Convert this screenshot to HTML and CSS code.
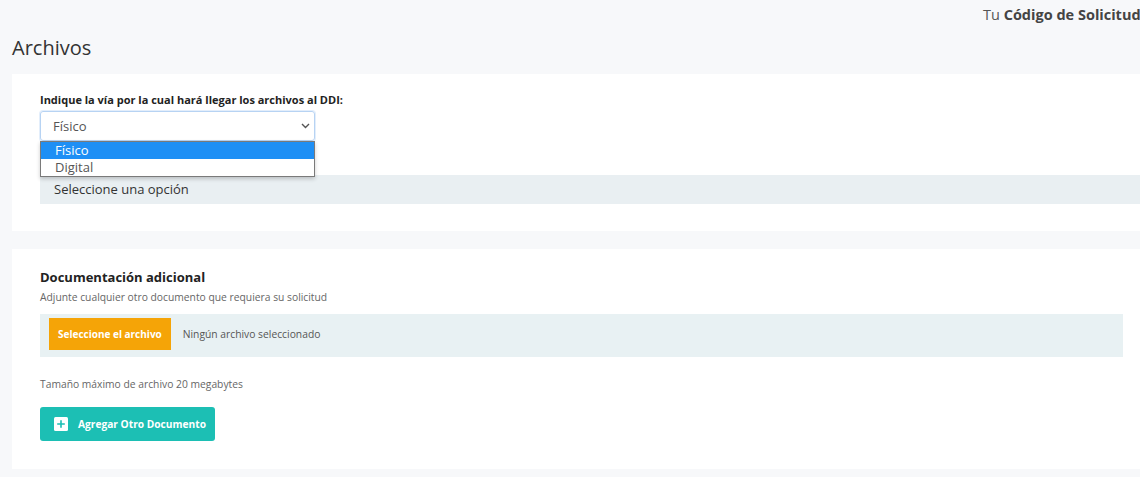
FILE: index.html
```html
<!DOCTYPE html>
<html lang="es">
<head>
  <meta charset="UTF-8">
  <meta name="viewport" content="width=device-width, initial-scale=1.0">
  <title>Archivos</title>
  <link rel="stylesheet" href="styles.css">
</head>
<body>
  <div class="topbar">Tu <b>Código de Solicitud</b></div>
  <h2 class="pageTitle">Archivos</h2>

  <div class="card cardVia">
    <label class="fieldLabel" for="listVia">Indique la vía por la cual hará llegar los archivos al DDI:</label>
    <div class="selectWrap">
      <div class="selectBox" id="listVia">
        <span>Físico</span>
        <svg class="chevron" width="9" height="6" viewBox="0 0 9 6"><path d="M1 1l3.5 3.5L8 1" fill="none" stroke="#555" stroke-width="1.4"/></svg>
      </div>
      <div class="selectMenu">
        <div class="selectOption active">Físico</div>
        <div class="selectOption">Digital</div>
      </div>
    </div>
    <div class="infoRow">Seleccione una opción</div>
  </div>

  <div class="card cardDocs">
    <h3 class="cardTitle">Documentación adicional</h3>
    <p class="hint">Adjunte cualquier otro documento que requiera su solicitud</p>
    <div class="fileRow">
      <span class="btnFile">Seleccione el archivo</span>
      <span class="fileName">Ningún archivo seleccionado</span>
    </div>
    <p class="hint sizeNote">Tamaño máximo de archivo 20 megabytes</p>
    <button class="btnAdd" type="button">
      <svg class="plusIcon" width="14" height="14" viewBox="0 0 14 14"><rect width="14" height="14" rx="1.5" fill="#fff"/><path d="M7 3.2v7.6M3.2 7h7.6" stroke="#1cbfb4" stroke-width="1.6"/></svg>
      <span>Agregar Otro Documento</span>
    </button>
  </div>
</body>
</html>
```

FILE: styles.css
```css
body {
  font-family: "Open Sans", Arial, sans-serif;
  margin: 0;
  padding: 0;
  background-color: #f7f8fa;
  color: #333;
  overflow: hidden;
}

.topbar {
  padding-left: 983px;
  font-size: 14.5px;
  line-height: 20px;
  padding-top: 5px;
  color: #555;
  white-space: nowrap;
}

.topbar b {
  color: #444;
}

.pageTitle {
  font-size: 20px;
  font-weight: 400;
  line-height: 27px;
  margin: 9px 0 13px 12px;
  color: #333;
}

.card {
  background-color: #fff;
  margin-left: 12px;
  width: 1083px;
  padding: 0 40px 0 28px;
}

.cardVia {
  padding-top: 18px;
  padding-bottom: 27px;
  margin-bottom: 18px;
}

.fieldLabel {
  display: block;
  font-size: 11px;
  font-weight: 700;
  line-height: 16px;
  color: #222;
  margin-bottom: 3px;
}

.selectWrap {
  position: relative;
  width: 275px;
  margin-bottom: 34px;
}

.selectBox {
  display: flex;
  align-items: center;
  justify-content: space-between;
  height: 30px;
  box-sizing: border-box;
  padding: 0 4px 0 12px;
  border: 1px solid #b7d3f3;
  border-radius: 3px;
  font-size: 13px;
  color: #555;
  box-shadow: 0 0 0 1px #e3eefb;
}

.selectMenu {
  position: absolute;
  left: 0;
  right: 0;
  top: 30px;
  background-color: #fff;
  border: 1px solid #7a7a7a;
  box-shadow: 0 2px 4px rgba(0, 0, 0, 0.2);
  z-index: 2;
}

.selectOption {
  font-size: 13px;
  line-height: 17px;
  padding: 0 14px;
  color: #555;
}

.selectOption.active {
  background-color: #1e8ff5;
  color: #fff;
}

.infoRow {
  background-color: #e9eff2;
  margin-right: -40px;
  height: 29px;
  line-height: 29px;
  padding-left: 14px;
  font-size: 13px;
  color: #333;
}

.cardDocs {
  padding-top: 19px;
  padding-bottom: 28px;
}

.cardTitle {
  font-size: 13px;
  font-weight: 700;
  line-height: 18px;
  margin: 0;
  color: #222;
}

.hint {
  font-size: 10.3px;
  line-height: 14px;
  color: #666;
  margin: 4px 0 10px;
}

.fileRow {
  display: flex;
  align-items: center;
  background-color: #e8f1f3;
  padding: 4px 9px 7px;
}

.btnFile {
  background-color: #f5a407;
  color: #fff;
  font-size: 10px;
  font-weight: 700;
  height: 32px;
  line-height: 32px;
  padding: 0 9px;
}

.fileName {
  font-size: 10.3px;
  color: #555;
  margin-left: 12px;
}

.sizeNote {
  margin: 20px 0 16px;
}

.btnAdd {
  display: flex;
  align-items: center;
  gap: 10px;
  height: 34px;
  width: 175px;
  padding: 0 0 0 14px;
  border: none;
  border-radius: 3px;
  background-color: #1cbfb4;
  color: #fff;
  font-family: "Open Sans", Arial, sans-serif;
  font-size: 10.2px;
  font-weight: 700;
  white-space: nowrap;
  text-align: left;
  cursor: pointer;
}

.plusIcon {
  flex-shrink: 0;
}
```
